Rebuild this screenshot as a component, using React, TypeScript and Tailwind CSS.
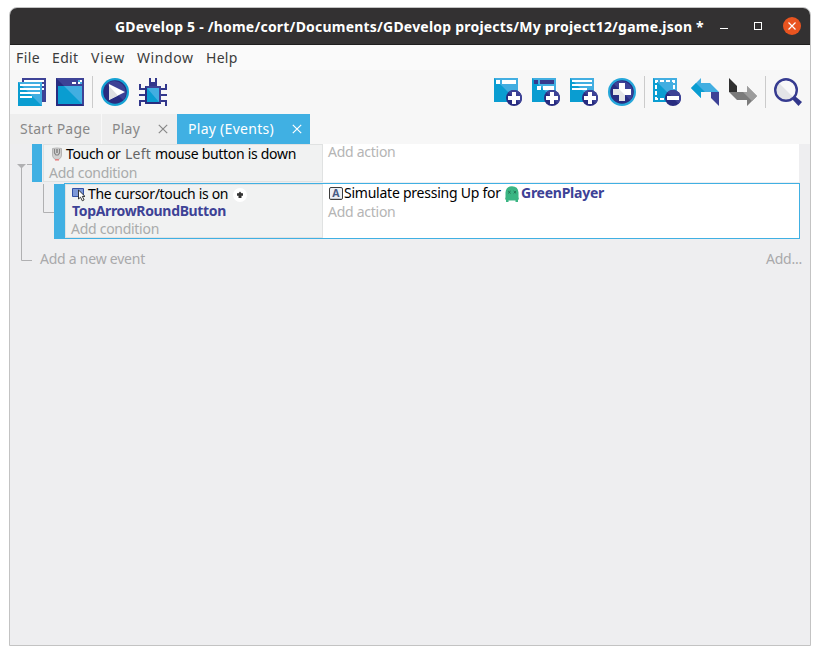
import type { ReactNode } from "react";

function Icon({ className = "", children }: { className?: string; children: ReactNode }) {
  return (
    <svg viewBox="0 0 28 28" className={`h-7 w-7 shrink-0 ${className}`}>
      {children}
    </svg>
  );
}

function Badge({ minus = false }: { minus?: boolean }) {
  return (
    <>
      <circle cx="20" cy="20" r="8" fill="#282c80" />
      <path d="M14.3 14.3A8 8 0 0 1 25.7 25.7Z" fill="#3d4296" />
      <path d={minus ? "M14 18h12v4H14z" : "M18 14h4v4h4v4h-4v4h-4v-4h-4v-4h4z"} fill="#fff" />
    </>
  );
}

function Sheet() {
  return (
    <>
      <path d="M0 0h24v24H0z" fill="#0a9dd1" />
      <path d="M0 0h24v24z" fill="#42aee1" />
    </>
  );
}

function ProjectIcon() {
  return (
    <Icon>
      <path d="M4 0h24v24H4z" fill="#3d4296" />
      <path d="M6 2h20v2H6zM24 6h2v2h-2zM24 10h2v2h-2z" fill="#fff" />
      <path d="M0 4h24v24H0z" fill="#0a9dd1" />
      <path d="M0 4h24v24z" fill="#42aee1" />
      <path d="M2 6h20v2H2zM2 10h20v2H2zM2 14h20v2H2zM2 18h12v2H2z" fill="#fff" />
    </Icon>
  );
}

function SceneIcon() {
  return (
    <Icon>
      <path d="M0 0h28v28H0z" fill="#282c80" />
      <path d="M0 0h28v28z" fill="#3d4296" />
      <path d="M2 8h24v18H2z" fill="#0a9dd1" />
      <path d="M8 8h18v18z" fill="#42aee1" />
      <path d="M16 4h4v2h-4zM24 2h2v2h-2zM22 4h2v2h-2z" fill="#fff" />
      <path d="M22 2h2v2h-2zM24 4h2v2h-2z" fill="#42aee1" />
    </Icon>
  );
}

function PlayIcon() {
  return (
    <Icon>
      <circle cx="14" cy="14" r="14" fill="#16a2d4" />
      <circle cx="14" cy="14" r="11.8" fill="#282c80" />
      <path d="M5.7 5.7A11.8 11.8 0 0 1 22.3 22.3Z" fill="#3d4296" />
      <path d="M8 6v16l16-8z" fill="#fff" />
      <path d="M8 8v14l9-4.5z" fill="#dedfe1" />
    </Icon>
  );
}

function DebugIcon() {
  return (
    <Icon>
      <path d="M10 0h2v4h4V0h2v8h4v2h4V6h2v6h-6v4h6v2h-6v4h6v6h-2v-4H2v4H0v-6h6v-4H0v-2h6v-4H0V6h2v4h4V8h4z" fill="#32378b" />
      <path d="M6 8h16v18H6z" fill="#282c80" />
      <path d="M6 8h16v18z" fill="#3d4296" />
      <path d="M8 10h12v14H8z" fill="#0a9dd1" />
      <path d="M8 10h12v14z" fill="#42aee1" />
    </Icon>
  );
}

function AddEventIcon() {
  return (
    <Icon>
      <Sheet />
      <path d="M2 2h4v4H2zM8 2h14v4H8z" fill="#fff" />
      <Badge />
    </Icon>
  );
}

function AddSubEventIcon() {
  return (
    <Icon>
      <Sheet />
      <path d="M2 2h4v4H2zM8 2h14v4H8z" fill="#363a8d" />
      <path d="M5 8h4v4H5zM11 8h11v4H11z" fill="#fff" />
      <Badge />
    </Icon>
  );
}

function AddCommentIcon() {
  return (
    <Icon>
      <Sheet />
      <path d="M2 2h20v2H2zM2 6h20v2H2zM2 10h15v2H2z" fill="#fff" />
      <Badge />
    </Icon>
  );
}

function AddMoreIcon() {
  return (
    <Icon>
      <circle cx="14" cy="14" r="14" fill="#26a7da" />
      <circle cx="14" cy="14" r="11.8" fill="#282c80" />
      <path d="M5.7 5.7A11.8 11.8 0 0 1 22.3 22.3Z" fill="#3d4296" />
      <path d="M11 5h6v6h6v6h-6v6h-6v-6H5v-6h6z" fill="#fff" />
      <path d="M5 11h6l6 6v6h-6v-6H5z" fill="#e5e6e8" />
    </Icon>
  );
}

function DeleteIcon() {
  return (
    <Icon>
      <Sheet />
      <path d="M3 3h18v18H3z" fill="none" stroke="#fff" strokeWidth="2" strokeDasharray="4 2" strokeDashoffset="2" />
      <Badge minus />
    </Icon>
  );
}

function UndoIcon() {
  return (
    <Icon>
      <path d="M20 14h8v14l-8-8z" fill="#3d4296" />
      <path d="M0 10L10 0v5h9l9 9H10v6z" fill="#42aee1" />
      <path d="M0 10l5-5 9 9h-4v6z" fill="#0a9dd1" />
    </Icon>
  );
}

function RedoIcon() {
  return (
    <Icon>
      <path d="M0 0l8 8v6H0z" fill="#303030" />
      <path d="M0 14h18V8l10 10-10 10v-6H8z" fill="#7b7b7b" />
      <path d="M14 14h4V8l10 10-5 5z" fill="#9c9c9c" />
    </Icon>
  );
}

function SearchIcon() {
  return (
    <Icon>
      <path d="M18.500 21.500l3-3 6.500 5.500-3.500 4z" fill="#32378b" />
      <circle cx="12" cy="12" r="10.6" fill="#f8f8f9" />
      <path d="M4.5 4.5A10.6 10.6 0 0 0 19.5 19.5z" fill="#e3e4e7" />
      <circle cx="12" cy="12" r="10.8" fill="none" stroke="#363b90" strokeWidth="2.400" />
    </Icon>
  );
}

function MouseIcon() {
  return (
    <svg viewBox="0 0 12 14" className="mt-[2px] h-3.5 w-3 shrink-0">
      <path d="M1.500 1.500Q6 .5 10.500 1.500V8Q10 12.500 6 12.500T1.500 8z" fill="#d2d2d2" stroke="#b4b4b4" />
      <path d="M3.500 2v4L5 8h2l1.500-2V2" fill="none" stroke="#858585" strokeWidth="1.200" />
      <path d="M6 2v4" stroke="#6a6a6a" strokeWidth="1.200" />
      <path d="M4 12.300h4v1.200H4z" fill="#ea7070" />
    </svg>
  );
}

function CursorIcon() {
  return (
    <svg viewBox="0 0 14 15" className="mt-[3px] h-[15px] w-3.5 shrink-0">
      <path d="M.5 1.500h11v8H.5z" fill="#7d98d8" stroke="#3350a5" />
      <path d="M6.500 3v9l2-1.800 1.800 3.600 1.800-.9-1.800-3.500h2.700z" fill="#fff" stroke="#222" strokeWidth=".9" />
    </svg>
  );
}

function UpButtonIcon() {
  return (
    <svg viewBox="0 0 14 14" className="ml-[5px] mt-[4px] h-3.5 w-3.5 shrink-0">
      <circle cx="7" cy="7" r="7" fill="#fff" />
      <path d="M7 3.500L8.500 5.300H10v2.400H8.500V10h-3V7.700H4V5.300h1.500z" fill="#333" />
    </svg>
  );
}

function KeyIcon() {
  return (
    <svg viewBox="0 0 14 14" className="mt-[4px] h-3.5 w-3.5 shrink-0">
      <rect x=".5" y=".5" width="13" height="12" rx="1.500" fill="#eef0f4" stroke="#3c3c3c" />
      <path d="M2 11.500h10" stroke="#c5c9d2" />
      <text x="7" y="10" textAnchor="middle" fontFamily="Noto Sans" fontWeight="700" fontSize="10.500" fill="#465b85">A</text>
    </svg>
  );
}

function PlayerIcon() {
  return (
    <svg viewBox="0 0 14 16" className="ml-[4px] mt-[3px] h-4 w-3.5 shrink-0">
      <path d="M.5 11V6.500Q1 .3 7 .3T13.500 6.500V11l.5 2.500h-1V16h-2.500v-1.500h-7V16H1v-2.500H0z" fill="#3bb583" />
      <path d="M3.200 5l2.400 2.400m0-2.400L3.200 7.400M8.700 5l2.400 2.400m0-2.400L8.700 7.400" stroke="#20694d" strokeWidth=".9" />
    </svg>
  );
}

function TabClose({ className = "" }: { className?: string }) {
  return (
    <svg viewBox="0 0 10 10" className={`h-2.5 w-2.5 ${className}`}>
      <path d="M.8.8l8.400 8.400m0-8.400L.8 9.200" fill="none" stroke="currentColor" strokeWidth="1.200" />
    </svg>
  );
}

export default function App() {
  return (
    <div className="h-[655px] w-[820px] overflow-hidden bg-white pl-[9px] pt-[7px] font-['Noto_Sans',sans-serif] text-sm leading-[19px] whitespace-nowrap">
      <div className="flex h-[639px] w-[802px] flex-col overflow-hidden rounded-t-lg border border-[#c3c3c3] bg-[#eeeef0]">
        <header className="flex h-[37px] shrink-0 border-b border-[#1f1e1e] bg-[#333132] pl-[105px] pt-[9px]">
          <h1 className="w-[601px] font-bold tracking-[0.21px] text-white">GDevelop 5 - /home/cort/Documents/GDevelop projects/My project12/game.json *</h1>
          <span className="ml-1 mt-[11px] h-px w-2 bg-white" />
          <span className="ml-[26px] mt-[5px] h-2 w-2 border border-white" />
          <button className="ml-[21px] flex h-[18px] w-[18px] items-center justify-center rounded-full bg-[#e95420] text-white">
            <svg viewBox="0 0 8 8" className="h-2 w-2"><path d="M.5.5l7 7m0-7l-7 7" stroke="currentColor" strokeWidth="1.200" /></svg>
          </button>
        </header>

        <nav className="flex h-[25px] shrink-0 bg-[#fafafa] pl-1.5 pt-[3px] text-[#3c3c3c]">
          <span className="w-9 tracking-[0.4px]">File</span>
          <span className="w-[39px] tracking-[0.36px]">Edit</span>
          <span className="w-[46px] tracking-[0.84px]">View</span>
          <span className="w-[69px] tracking-[0.57px]">Window</span>
          <span className="tracking-[0.3px]">Help</span>
        </nav>

        <div className="flex h-11 shrink-0 items-start justify-between bg-[#f7f7f7] pl-2 pr-2 pt-1.5">
          <div className="flex">
            <div className="flex gap-2.5 pt-0.5"><ProjectIcon /><SceneIcon /></div>
            <span className="ml-2 mr-2 h-8 w-px bg-[#cbcbcb]" />
            <div className="flex gap-2.5 pt-0.5"><PlayIcon /><DebugIcon /></div>
          </div>
          <div className="flex">
            <div className="flex gap-2.5 pt-0.5"><AddEventIcon /><AddSubEventIcon /><AddCommentIcon /><AddMoreIcon /></div>
            <span className="mx-2 h-8 w-px bg-[#cbcbcb]" />
            <div className="flex gap-2.5 pt-0.5"><DeleteIcon /><UndoIcon /><RedoIcon /></div>
            <span className="mx-2 h-8 w-px bg-[#cbcbcb]" />
            <div className="pt-0.5"><SearchIcon /></div>
          </div>
        </div>

        <div className="flex h-[30px] shrink-0 bg-[#f7f7f7] text-[#888]">
          <div className="w-[92px] border-r border-[#f8f8f8] bg-[#eeeeee] pl-2.5 pt-[5px] tracking-[0.26px]">Start Page</div>
          <div className="flex w-[75px] bg-[#eeeeee] pl-2.5 pt-[5px] tracking-[0.23px]">
            <span className="w-[46px]">Play</span><TabClose className="mt-[5px]" />
          </div>
          <div className="flex w-[133px] bg-[#40b0e3] pl-[11px] pt-[5px] tracking-[0.28px] text-white">
            <span className="w-[104px]">Play (Events)</span><TabClose className="mt-[5px]" />
          </div>
        </div>

        <main className="flex grow pr-[10px]">
          <svg viewBox="0 0 22 120" className="h-[120px] w-[22px] shrink-0">
            <path d="M11.500 21V116.500H22M17 20.500h5" fill="none" stroke="#b0b0b2" />
            <path d="M7 20h9l-4.500 4.500z" fill="#b0b0b2" />
          </svg>
          <div className="flex min-w-0 grow flex-col">
            <section className="flex h-[38px] pr-px">
              <span className="w-[10px] bg-[#40b0e3]" />
              <div className="ml-px flex w-[280px] flex-col border border-[#e0e2e2] bg-[#f1f2f2] text-black">
                <div className="-mt-px flex h-[19px] pl-[7px]">
                  <div className="mt-px flex"><MouseIcon /></div>
                  <span className="ml-[3px] w-[59px] tracking-[-0.34px]">Touch or</span>
                  <span className="w-[30px] tracking-[0.22px] text-[#666]">Left</span>
                  <span className="tracking-[-0.3px]">mouse button is down</span>
                </div>
                <div className="pl-[5px] tracking-[-0.28px] text-[#a9abab]">Add condition</div>
              </div>
              <div className="grow bg-white pl-[5px] tracking-[-0.27px] text-[#b5b5b5]"><div className="-mt-0.5">Add action</div></div>
            </section>

            <section className="mt-px flex h-[56px]">
              <svg viewBox="0 0 22 56" className="h-14 w-[22px] shrink-0">
                <path d="M11.500 1V29.500H22" fill="none" stroke="#b0b0b2" />
              </svg>
              <span className="mt-px w-[10px] bg-[#40b0e3]" />
              <div className="flex grow border border-[#40b0e3] bg-white">
                <div className="w-[258px] border border-[#e0e2e2] bg-[#f1f2f2] pl-[6px] leading-[17px] text-black">
                  <div className="flex h-[17px]">
                    <div className="-mt-px flex"><CursorIcon /></div>
                    <span className="ml-[2px] tracking-[-0.34px]">The cursor/touch is on</span>
                    <div className="-mt-px flex"><UpButtonIcon /></div>
                  </div>
                  <div className="h-[18px] font-bold tracking-[-0.34px] text-[#3d4296]">TopArrowRoundButton</div>
                  <div className="-ml-px tracking-[-0.28px] text-[#a9abab]">Add condition</div>
                </div>
                <div className="pl-[5px] text-black">
                  <div className="-mt-px flex h-[19px]">
                    <div className="ml-px flex"><KeyIcon /></div>
                    <span className="ml-px w-[157px] tracking-[-0.24px]">Simulate pressing Up for</span>
                    <PlayerIcon />
                    <span className="ml-[2px] font-bold tracking-[-0.25px] text-[#3d4296]">GreenPlayer</span>
                  </div>
                  <div className="tracking-[-0.27px] text-[#b5b5b5]">Add action</div>
                </div>
              </div>
            </section>

            <footer className="flex justify-between pl-2 pt-[10px] text-[#a9a9ab]">
              <span className="tracking-[-0.24px]">Add a new event</span>
              <span className="-mr-0.5 tracking-[-0.24px]">Add...</span>
            </footer>
          </div>
        </main>
      </div>
    </div>
  );
}
